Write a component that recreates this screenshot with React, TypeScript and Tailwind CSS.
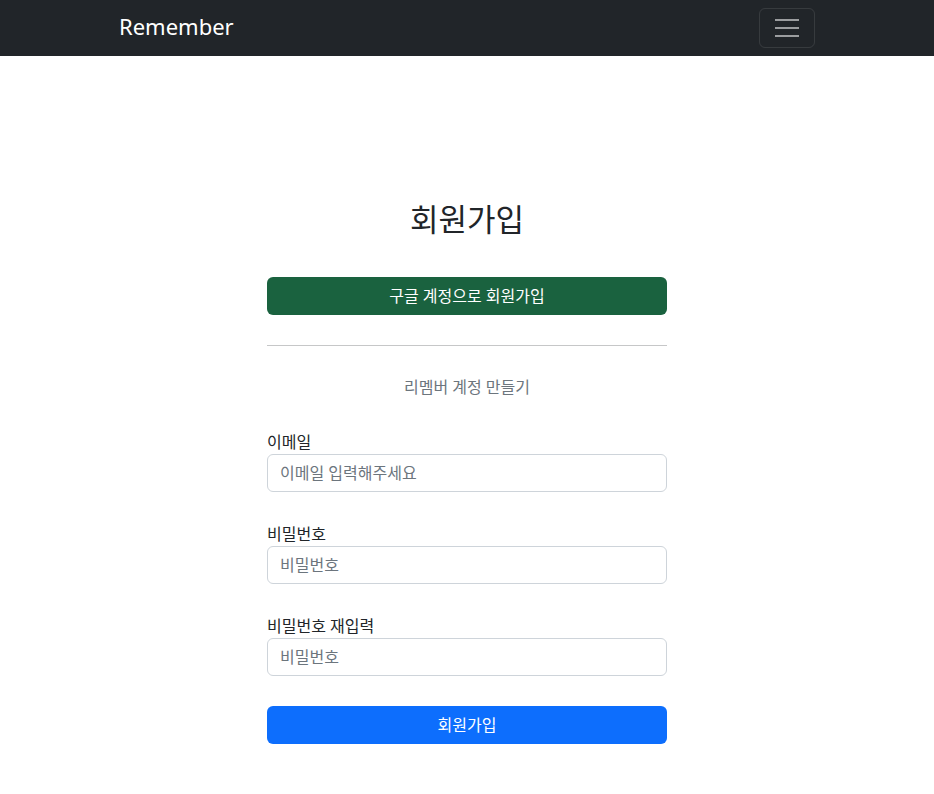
export default function App() {
  const font = { fontFamily: '"Noto Sans", "Noto Sans CJK KR", sans-serif' }

  const fields = [
    { id: "email", label: "이메일", type: "email", placeholder: "이메일 입력해주세요" },
    { id: "password", label: "비밀번호", type: "password", placeholder: "비밀번호" },
    { id: "password2", label: "비밀번호 재입력", type: "password", placeholder: "비밀번호" },
  ]

  return (
    <div className="min-h-screen bg-white text-[#212529]" style={font}>
      {/* Navbar */}
      <nav className="h-14 bg-[#212529]">
        <div className="mx-auto flex h-full w-[720px] items-center justify-between px-3">
          <a href="#" className="pb-1 text-[22px] leading-[30px] text-white">
            Remember
          </a>
          <button className="flex h-10 w-14 flex-col items-center justify-center gap-[6px] rounded-md border border-white/10">
            <span className="block h-[2px] w-6 bg-white/55" />
            <span className="block h-[2px] w-6 bg-white/55" />
            <span className="block h-[2px] w-6 bg-white/55" />
          </button>
        </div>
      </nav>

      {/* Signup form */}
      <form className="mx-auto w-[400px] pt-[145px]" onSubmit={(e) => e.preventDefault()}>
        <h2 className="text-center text-[31px] font-normal leading-[1.2]">회원가입</h2>

        <button
          type="button"
          className="mt-[39px] h-[38px] w-full rounded-md bg-[#1a623f] text-base text-white"
        >
          구글 계정으로 회원가입
        </button>

        <hr className="mt-[30px] border-t border-[#c6c7c8]" />

        <p className="mt-[29px] text-center text-base leading-6 text-[#6c757d]">리멤버 계정 만들기</p>

        {fields.map((field, i) => (
          <div key={field.id} className={i === 0 ? "mt-[29px]" : "mt-[28px]"}>
            <label htmlFor={field.id} className="block pt-[2px] text-base leading-6">
              {field.label}
            </label>
            <input
              id={field.id}
              type={field.type}
              placeholder={field.placeholder}
              className="block h-[38px] w-full rounded-md border border-[#ced4da] px-3 text-base placeholder:text-[#6c757d]"
            />
          </div>
        ))}

        <button type="submit" className="mt-[30px] h-[38px] w-full rounded-md bg-[#0d6efd] text-base text-white">
          회원가입
        </button>
      </form>
    </div>
  )
}
